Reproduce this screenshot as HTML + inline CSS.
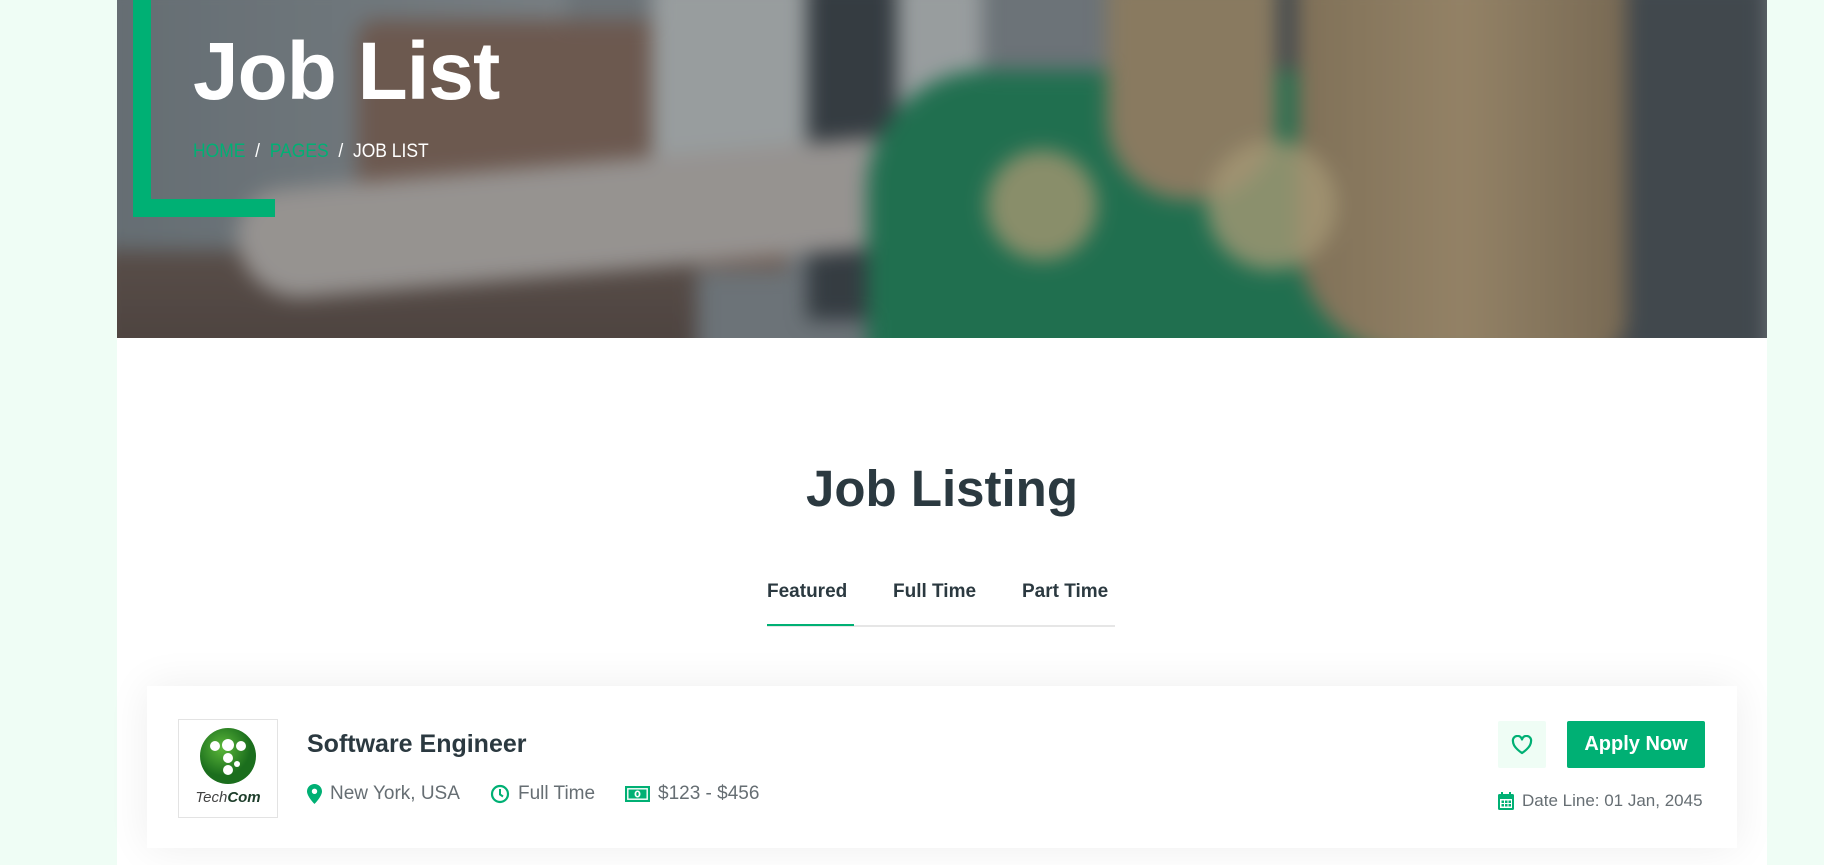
<!DOCTYPE html>
<html><head><meta charset="utf-8"><style>
*{margin:0;padding:0;box-sizing:border-box}
body{width:1824px;height:865px;overflow:hidden;background:#effdf5;font-family:"Liberation Sans",Arial,sans-serif;position:relative}
.wrap{position:absolute;left:117px;top:0;width:1650px;height:865px;background:#fff}
.hero{position:absolute;left:0;top:0;width:1650px;height:338px;overflow:hidden;background:#8a9094}
.img{position:absolute;inset:-20px;filter:blur(10px)}
.img div{position:absolute}
.ov{position:absolute;inset:0;background:rgba(40,50,55,.3)}
.L1{position:absolute;left:16px;top:0;width:18px;height:217px;background:#00b074}
.L2{position:absolute;left:16px;top:199px;width:142px;height:18px;background:#00b074}
h1{position:absolute;left:76px;top:25px;color:#fff;font-size:82px;font-weight:bold;letter-spacing:-1px}
.bc{position:absolute;left:76px;top:141px;font-size:19px;color:#fff;transform:scaleX(.92);transform-origin:left}
.bc .g{color:#00b074}
h2{position:absolute;left:0;width:1650px;text-align:center;top:459px;font-size:51px;color:#2b3940;font-weight:bold}
.tabs{position:absolute;left:650px;top:581px;width:348px;height:46px;border-bottom:2px solid #e6e6e6;font-size:19px;font-weight:bold;color:#2b3940}
.tabs span{position:absolute;top:0}
.tabs .ul{position:absolute;left:0;top:43px;width:87px;height:2px;background:#00b074}
.card{position:absolute;left:30px;top:686px;width:1590px;height:162px;background:#fff;box-shadow:0 0 40px rgba(0,0,0,.07)}
.logo{position:absolute;left:31px;top:33px;width:100px;height:99px;border:1px solid #e3e3e3}
.title{position:absolute;left:160px;top:44px;font-size:25px;font-weight:bold;color:#2b3940}
.meta{position:absolute;top:97px;font-size:19px;color:#666e73;display:flex;align-items:center;gap:8px}
.heart{position:absolute;left:1351px;top:35px;width:48px;height:47px;background:#effdf5;border-radius:2px;display:flex;align-items:center;justify-content:center}
.apply{position:absolute;left:1420px;top:35px;width:138px;height:47px;background:#00b074;color:#fff;font-weight:bold;font-size:20px;border-radius:2px;display:flex;align-items:center;justify-content:center}
.date{position:absolute;left:1351px;top:105px;font-size:17px;color:#666e73;display:flex;align-items:center;gap:8px}
</style></head><body>
<div class="wrap">
<div class="hero">
 <div class="img">
 <div style="left:0;top:0;width:470px;height:378px;background:linear-gradient(90deg,#7f878c,#9aa0a3)"></div>
 <div style="left:260px;top:40px;width:430px;height:250px;background:#8a6a5a;border-radius:20px 0 0 0"></div>
 <div style="left:0;top:270px;width:600px;height:108px;background:linear-gradient(180deg,#6e5a50,#5c4a42)"></div>
 <div style="left:555px;top:0;width:330px;height:205px;background:#c9cccb"></div>
 <div style="left:710px;top:0;width:90px;height:340px;background:#3b4146"></div>
 <div style="left:1070px;top:0;width:600px;height:378px;background:#4c5257"></div>
 <div style="left:140px;top:180px;width:760px;height:110px;background:#c6bdb7;border-radius:60px 20px 0 80px;transform:rotate(-5deg)"></div>
 <div style="left:770px;top:90px;width:620px;height:300px;background:#1e8a5a;border-radius:120px 60px 0 0"></div>
 <div style="left:1010px;top:0;width:170px;height:220px;background:#b39a72;border-radius:0 0 80px 80px"></div>
 <div style="left:1200px;top:0;width:330px;height:378px;background:linear-gradient(90deg,#a68c66,#c2a57a,#9b8260);border-radius:0 0 40px 120px"></div>
 <div style="left:890px;top:170px;width:110px;height:110px;background:#d9c08a;border-radius:50%;opacity:.8"></div>
 <div style="left:1110px;top:160px;width:130px;height:130px;background:#dcc490;border-radius:50%;opacity:.8"></div>
 </div>
 <div class="ov"></div>
 <div class="L1"></div><div class="L2"></div>
 <h1>Job List</h1>
 <div class="bc"><span class="g">HOME</span> &nbsp;/&nbsp; <span class="g">PAGES</span> &nbsp;/&nbsp; JOB LIST</div>
</div>
<h2>Job Listing</h2>
<div class="tabs"><span style="left:0">Featured</span><span style="left:126px">Full Time</span><span style="left:255px">Part Time</span><div class="ul"></div></div>
<div class="card">
 <div class="logo">
  <svg width="98" height="97" viewBox="0 0 98 97"><defs><radialGradient id="r" cx=".4" cy=".35"><stop offset="0" stop-color="#5cb83a"/><stop offset="1" stop-color="#1b6e1d"/></radialGradient></defs>
  <ellipse cx="49" cy="36" rx="28" ry="28" fill="url(#r)"/>
  <g fill="#fff"><circle cx="36" cy="26" r="5"/><circle cx="49" cy="25" r="6"/><circle cx="62" cy="26" r="5"/><circle cx="49" cy="38" r="5"/><circle cx="49" cy="50" r="5"/><circle cx="58" cy="44" r="3"/></g>
  <text x="49" y="82" text-anchor="middle" font-family="Liberation Sans" font-style="italic" font-size="15" fill="#444">Tech<tspan font-weight="bold" fill="#1d3d2a">Com</tspan></text></svg>
 </div>
 <div class="title">Software Engineer</div>
 <div class="meta" style="left:160px"><svg width="15" height="20" viewBox="0 0 15 20"><path d="M7.5 0C3.4 0 0 3.3 0 7.4 0 12.5 7.5 20 7.5 20S15 12.5 15 7.4C15 3.3 11.6 0 7.5 0zm0 10a2.7 2.7 0 1 1 0-5.4 2.7 2.7 0 0 1 0 5.4z" fill="#00b074"/></svg>New York, USA</div>
 <div class="meta" style="left:343px"><svg width="20" height="20" viewBox="0 0 20 20"><circle cx="10" cy="10" r="8" fill="none" stroke="#00b074" stroke-width="2.2"/><path d="M10 5v5.5l3 2" fill="none" stroke="#00b074" stroke-width="2"/></svg>Full Time</div>
 <div class="meta" style="left:478px"><svg width="25" height="16" viewBox="0 0 25 16"><rect x="1" y="1" width="23" height="14" fill="none" stroke="#00b074" stroke-width="2.2"/><rect x="3.5" y="3.5" width="18" height="9" fill="#00b074"/><ellipse cx="12.5" cy="8" rx="3" ry="3.5" fill="#fff"/><ellipse cx="12.5" cy="8" rx="1.2" ry="2" fill="#00b074"/></svg>$123 - $456</div>
 <div class="heart"><svg width="22" height="20" viewBox="0 0 22 20"><path d="M11 18S2 12.5 2 6.5A4.5 4.5 0 0 1 11 4.5 4.5 4.5 0 0 1 20 6.5C20 12.5 11 18 11 18z" fill="none" stroke="#00b074" stroke-width="2.2" stroke-linejoin="round"/></svg></div>
 <div class="apply">Apply Now</div>
 <div class="date"><svg width="16" height="18" viewBox="0 0 16 18"><rect x="0" y="2" width="16" height="16" rx="1.5" fill="#00b074"/><rect x="3" y="0" width="2" height="4" fill="#00b074"/><rect x="11" y="0" width="2" height="4" fill="#00b074"/><rect x="2" y="7" width="12" height="9" fill="#fff"/><g fill="#00b074"><rect x="3.5" y="8.5" width="2.5" height="2.5"/><rect x="7" y="8.5" width="2.5" height="2.5"/><rect x="10.5" y="8.5" width="2.5" height="2.5"/><rect x="3.5" y="12" width="2.5" height="2.5"/><rect x="7" y="12" width="2.5" height="2.5"/><rect x="10.5" y="12" width="2.5" height="2.5"/></g></svg>Date Line: 01 Jan, 2045</div>
</div>
</div>
</body></html>
